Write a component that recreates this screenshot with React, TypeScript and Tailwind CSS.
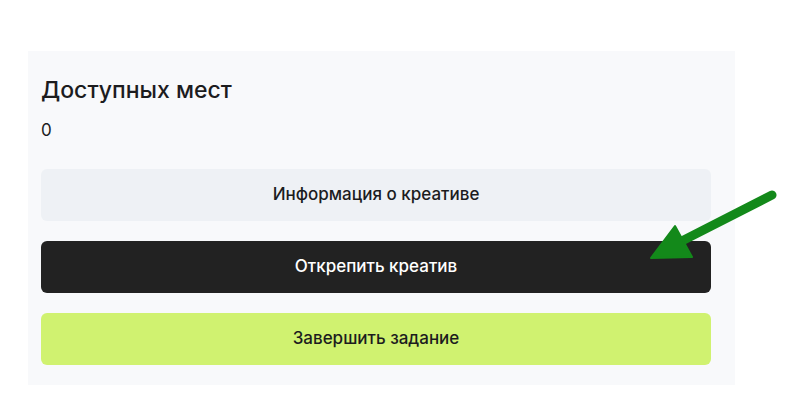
export default function App() {
  return (
    <main className="relative h-[413px] w-[800px] bg-white pt-[51px] pl-[28px] font-['Inter',sans-serif]">
      <section className="w-[707px] bg-[#f8f9fb] px-[13px] pt-[24px] pb-[20px]">
        <h2 className="text-[23px] leading-[30px] font-medium text-[#1c1c1e]">Доступных мест</h2>
        <div className="mt-[14px] text-[17px] leading-[22px] text-[#1c1c1e]">0</div>
        <div className="mt-[28px] mr-[11px] flex flex-col gap-[20px]">
          <button className="h-[52px] rounded-md bg-[#eef1f5] text-[17px] font-medium text-[#1c1c1e]">
            Информация о креативе
          </button>
          <button className="h-[52px] rounded-md bg-[#222222] text-[17px] font-medium text-white">
            Открепить креатив
          </button>
          <button className="h-[52px] rounded-md bg-[#d0f270] text-[17px] font-medium text-[#1c1c1e]">
            Завершить задание
          </button>
        </div>
      </section>

      {/* annotation arrow drawn over the page */}
      <svg className="absolute top-0 left-0" width="800" height="413" viewBox="0 0 800 413">
        <path d="M772 195 L676 244" stroke="#13891a" strokeWidth="9" strokeLinecap="round" fill="none" />
        <polygon points="651,258 675,226 692,257" fill="#13891a" stroke="#13891a" strokeWidth="2" strokeLinejoin="round" />
      </svg>
    </main>
  );
}
